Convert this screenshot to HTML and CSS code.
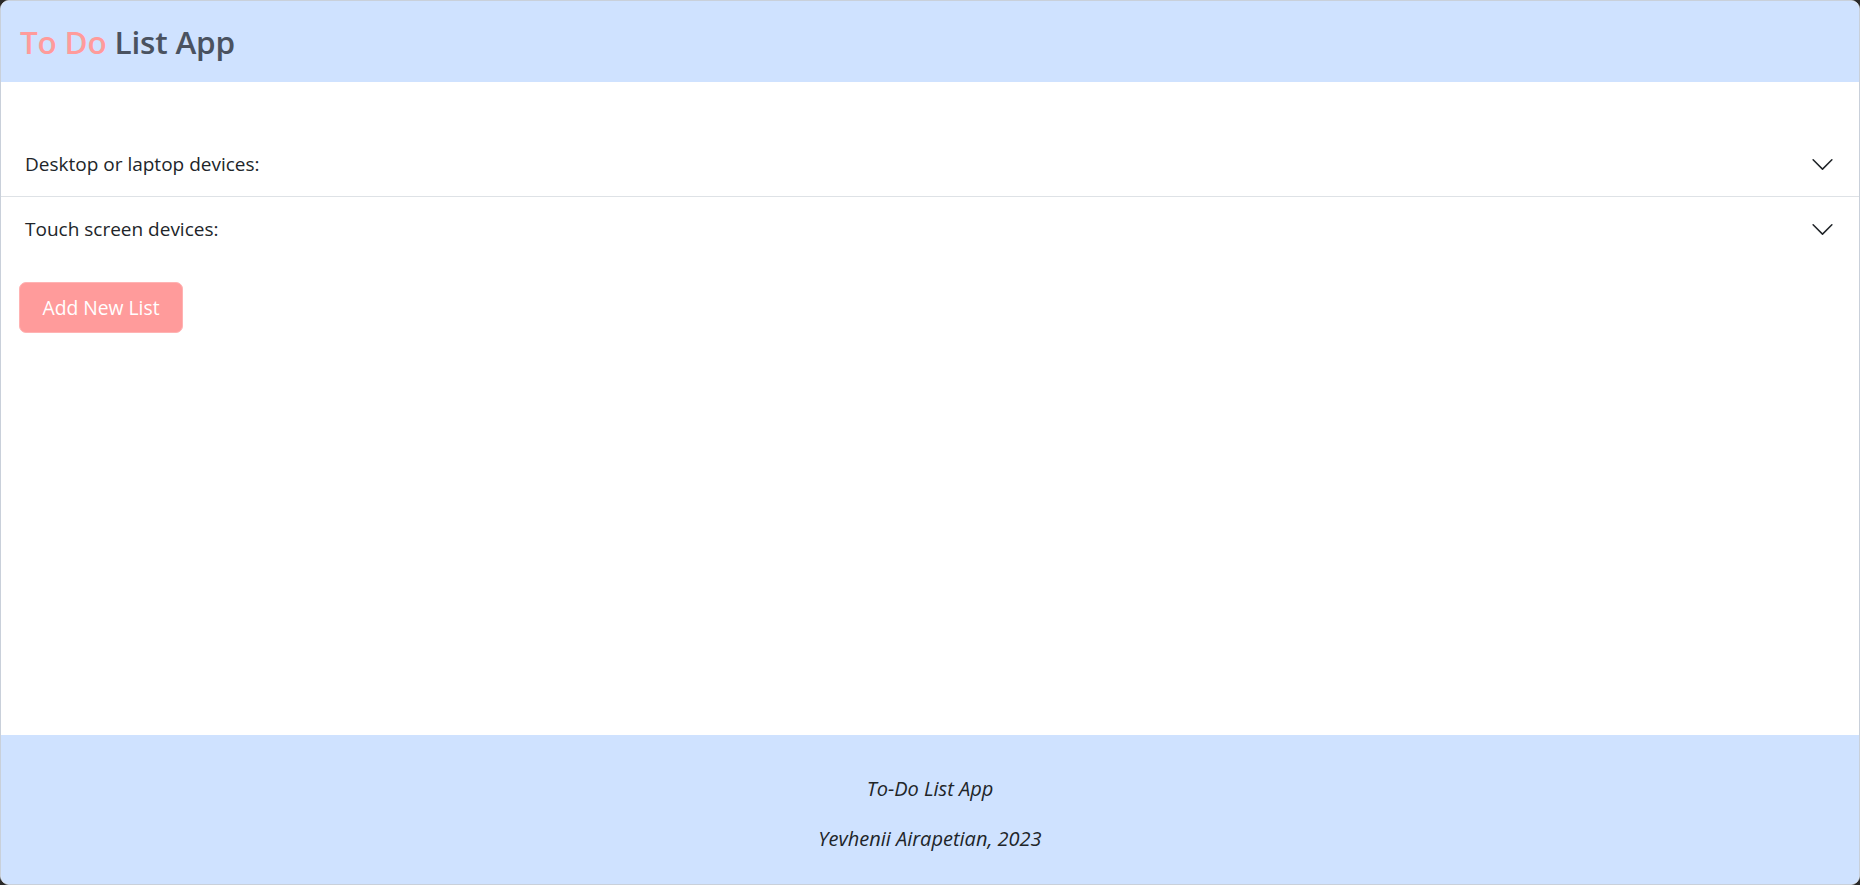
FILE: index.html
```html
<!DOCTYPE html>
<html lang="en">
<head>
<meta charset="utf-8">
<title>To Do List App</title>
<link rel="stylesheet" href="styles.css">
</head>
<body>
<div class="window">
  <header class="app-header">
    <h3 class="brand"><span class="brand-accent">To Do</span> List App</h3>
  </header>
  <main class="app-main">
    <div class="accordion">
      <div class="acc-item">
        <button class="acc-button" type="button">
          <span class="acc-title">Desktop or laptop devices:</span>
          <svg class="acc-icon" viewBox="0 0 16 16" width="25" height="25" aria-hidden="true"><path fill="#212529" d="M1.646 4.646a.5.5 0 0 1 .708 0L8 10.293l5.646-5.647a.5.5 0 0 1 .708.708l-6 6a.5.5 0 0 1-.708 0l-6-6a.5.5 0 0 1 0-.708z"/></svg>
        </button>
      </div>
      <div class="acc-item">
        <button class="acc-button" type="button">
          <span class="acc-title">Touch screen devices:</span>
          <svg class="acc-icon" viewBox="0 0 16 16" width="25" height="25" aria-hidden="true"><path fill="#212529" d="M1.646 4.646a.5.5 0 0 1 .708 0L8 10.293l5.646-5.647a.5.5 0 0 1 .708.708l-6 6a.5.5 0 0 1-.708 0l-6-6a.5.5 0 0 1 0-.708z"/></svg>
        </button>
      </div>
    </div>
    <div class="actions">
      <button class="btn-add" type="button">Add New List</button>
    </div>
  </main>
  <footer class="app-footer">
    <p>To-Do List App</p>
    <p>Yevhenii Airapetian, 2023</p>
  </footer>
</div>
</body>
</html>
```
FILE: styles.css
```css
* { box-sizing: border-box; }
html, body { margin: 0; padding: 0; }
body {
  background: #2a2a2a;
  font-family: "Open Sans", "Noto Sans", sans-serif;
  color: #212529;
}
.window {
  width: 1860px;
  height: 885px;
  border: 1px solid #c9d0da;
  border-radius: 9px;
  overflow: hidden;
  background: #fff;
  display: flex;
  flex-direction: column;
}
.app-header {
  height: 81px;
  background: #cfe2ff;
  display: flex;
  align-items: center;
  padding-left: 19px;
  flex: none;
}
.brand {
  margin: 0;
  font-size: 31.5px;
  font-weight: 600;
  line-height: 1.2;
  color: #4a5260;
  letter-spacing: -0.2px;
}
.brand-accent { color: #ff9b9b; }
.app-main {
  flex: 1;
  padding-top: 50px;
}
.accordion { display: flex; flex-direction: column; }
.acc-item + .acc-item { border-top: 1px solid #dee2e6; }
.acc-button {
  width: 100%;
  height: 64px;
  border: 0;
  background: #fff;
  padding: 0 24px 0 24px;
  display: flex;
  align-items: center;
  justify-content: space-between;
  font-family: inherit;
  font-size: 19px;
  color: #212529;
  cursor: pointer;
  text-align: left;
}
.acc-icon { flex: none; display: block; }
.actions { padding: 21px 0 0 18px; }
.btn-add {
  width: 164px;
  height: 51px;
  background: #ff9b9b;
  border: 1px solid #ffb3b3;
  border-radius: 7px;
  color: #fff;
  font-family: inherit;
  font-size: 19.3px;
  padding: 0;
  cursor: pointer;
}
.app-footer {
  flex: none;
  height: 149px;
  background: #cfe2ff;
  text-align: center;
  padding-top: 39px;
  font-style: italic;
  font-size: 20px;
}
.app-footer p { margin: 0 0 20px; line-height: 30px; }
```
